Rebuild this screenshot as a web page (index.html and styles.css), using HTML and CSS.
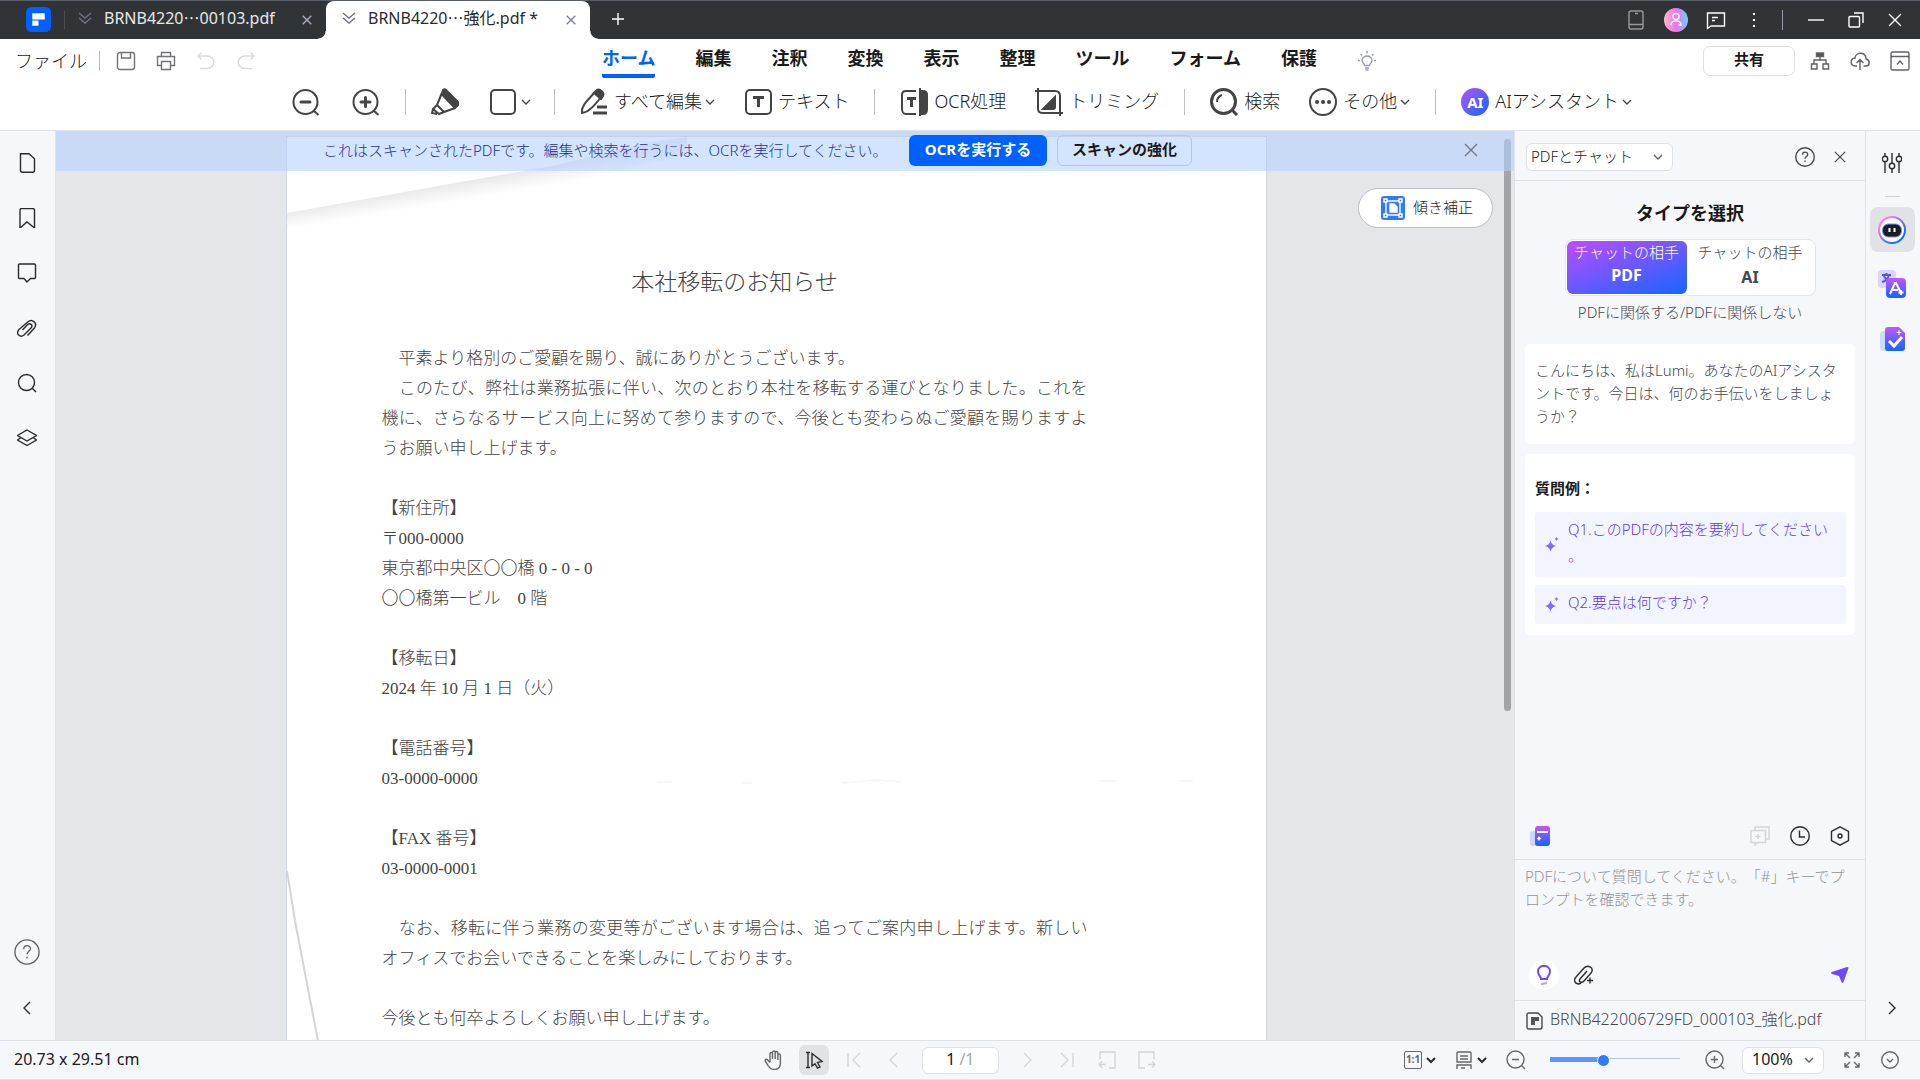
FILE: index.html
```html
<!DOCTYPE html>
<html lang="ja">
<head>
<meta charset="utf-8">
<title>BRNB422006729FD_000103_強化.pdf</title>
<link rel="stylesheet" href="styles.css">
</head>
<body>
<svg class="defs" aria-hidden="true">
  <defs>
    <linearGradient id="violetV" x1="0" y1="0" x2="0" y2="1"><stop offset="0" stop-color="#c855f5"/><stop offset="1" stop-color="#0f66ff"/></linearGradient>
    <linearGradient id="avatar" x1="0" y1="0" x2="1" y2="0"><stop offset="0" stop-color="#ffb8c4"/><stop offset=".5" stop-color="#f070f0"/><stop offset="1" stop-color="#66d4fa"/></linearGradient>
    <linearGradient id="ring" x1="0" y1="0" x2="1" y2="1"><stop offset="0.2" stop-color="#ff7cf0"/><stop offset=".75" stop-color="#1f6bff"/></linearGradient>
    <linearGradient id="fold" gradientUnits="userSpaceOnUse" x1="180" y1="44" x2="183" y2="62"><stop offset="0" stop-color="#e9e9e9"/><stop offset="1" stop-color="#ffffff"/></linearGradient>
  </defs>
  <symbol id="caret" viewBox="0 0 10 10"><path d="M1 3l4 4 4-4"/></symbol>
  <symbol id="cross" viewBox="0 0 14 14"><path d="M1 1l12 12M13 1L1 13"/></symbol>
  <symbol id="dbl" viewBox="0 0 14 14"><path d="M1 2l6 5 6-5M1 7l6 5 6-5"/></symbol>
  <symbol id="lens-minus" viewBox="0 0 20 20"><circle cx="9.500" cy="9.500" r="8.500"/><path d="M15.500 15.500L19 19M6 9.500h7"/></symbol>
  <symbol id="lens-plus" viewBox="0 0 20 20"><circle cx="9.500" cy="9.500" r="8.500"/><path d="M15.500 15.500L19 19M6 9.500h7M9.500 6v7"/></symbol>
  <symbol id="help" viewBox="0 0 20 20"><circle cx="10" cy="10" r="9.300"/><path d="M7.500 7.800c0-3.600 5.200-3.400 5.200-.3 0 2-2.600 2-2.600 4.200M10 13.600v1.400"/></symbol>
  <symbol id="spark" viewBox="0 0 14 16"><path d="M5.500 4.500Q6.500 9 11 10 6.500 11 5.500 15.500 4.500 11 0 10 4.500 9 5.500 4.500zM11.500 1q.4 1.600 2 2-1.600.4-2 2-.4-1.600-2-2 1.600-.4 2-2z"/></symbol>
</svg>

<div class="app">
  <header class="titlebar">
    <svg class="logo" viewBox="0 0 24 24"><rect width="24" height="24" rx="5" fill="#0061ff" stroke="none"/><path d="M6 6h12v6H6z" fill="#fff" stroke="none"/><path d="M6 13h6v5H6z" fill="#fff" stroke="none"/></svg>
    <span class="title-sep"></span>
    <div class="doc-tab">
      <svg class="i14"><use href="#dbl"/></svg>
      <span class="tab-name">BRNB4220⋯00103.pdf</span>
      <button class="plain tab-close" aria-label="閉じる"><svg class="i10"><use href="#cross"/></svg></button>
    </div>
    <div class="doc-tab active">
      <svg class="i14"><use href="#dbl"/></svg>
      <span class="tab-name">BRNB4220⋯強化.pdf *</span>
      <button class="plain tab-close" aria-label="閉じる"><svg class="i10"><use href="#cross"/></svg></button>
    </div>
    <button class="plain new-tab" aria-label="新しいタブ"><svg class="i14" viewBox="0 0 14 14"><path d="M7 1v12M1 7h12"/></svg></button>
    <div class="window-tools">
      <button class="plain dim" aria-label="モバイル"><svg class="i20" viewBox="0 0 20 20"><rect x="3" y="1" width="14" height="18" rx="2"/><path d="M3 14.500h14M9 3.500h3"/></svg></button>
      <button class="plain" aria-label="アカウント"><svg class="i24" viewBox="0 0 24 24"><circle cx="12" cy="12" r="12" fill="url(#avatar)" stroke="none"/><circle cx="12" cy="8.500" r="3"/><path d="M7 17c0-5.500 10-5.500 10 0h-2.500"/></svg></button>
      <button class="plain" aria-label="メッセージ"><svg class="i20" viewBox="0 0 20 20"><path d="M1.500 3h17v13H5l-3.500 2.500zM6 7.500h6M6 10.500h3"/></svg></button>
      <button class="plain" aria-label="メニュー"><svg class="i20" viewBox="0 0 20 20"><path d="M9 3h2v2H9zM9 9h2v2H9zM9 15h2v2H9z" fill="#fff" stroke="none"/></svg></button>
      <span class="win-sep"></span>
      <button class="plain" aria-label="最小化"><svg class="i16" viewBox="0 0 16 16"><path d="M0 8h16"/></svg></button>
      <button class="plain" aria-label="元に戻す"><svg class="i16" viewBox="0 0 16 16"><rect x="1" y="4.500" width="10.500" height="10.500" rx="1"/><path d="M6 1h9v10"/></svg></button>
      <button class="plain" aria-label="閉じる"><svg class="i14"><use href="#cross"/></svg></button>
    </div>
  </header>

  <div class="ribbon">
    <div class="menu-row">
      <div class="quick">
        <button class="plain file">ファイル</button>
        <span class="quick-sep"></span>
        <button class="plain" aria-label="保存"><svg class="i20" viewBox="0 0 20 20"><rect x="1.500" y="1.500" width="17" height="17" rx="2.500"/><path d="M5.500 2v5h9V2"/></svg></button>
        <button class="plain" aria-label="印刷"><svg class="i20" viewBox="0 0 20 20"><path d="M5.500 5.500V1.500h9v4M5 14.500H1.500v-9h17v9H15M5.500 10.500h9v8h-9z"/></svg></button>
        <button class="plain off" aria-label="元に戻す"><svg class="i20" viewBox="0 0 20 20"><path d="M5.500 1.500L2 5l3.500 3.500M2 5h9c9 0 9 12.500 0 12.500H4"/></svg></button>
        <button class="plain off" aria-label="やり直し"><svg class="i20" viewBox="0 0 20 20"><path d="M14.500 1.500L18 5l-3.500 3.500M18 5H9c-9 0-9 12.500 0 12.500h7"/></svg></button>
      </div>
      <nav class="menus">
        <a href="#" class="current">ホーム</a><a href="#">編集</a><a href="#">注釈</a><a href="#">変換</a><a href="#">表示</a><a href="#">整理</a><a href="#">ツール</a><a href="#">フォーム</a><a href="#">保護</a>
        <button class="plain hint" aria-label="ヒント"><svg class="i20" viewBox="0 0 20 20"><path d="M7.500 14.500c0-2-2.500-2.500-2.500-5 0-6 10-6 10 0 0 2.500-2.500 3-2.500 5zM8 17h4M8.500 19h3M10 0v2.500M1 9.500h2M17 9.500h2M3.500 3l1.500 1.500M16.500 3L15 4.500"/></svg></button>
      </nav>
      <div class="share-group">
        <button class="share">共有</button>
        <button class="plain" aria-label="組織"><svg class="i20" viewBox="0 0 20 20"><path d="M6.500 2h7v3.500h-7z" fill="#555"/><path d="M10 5.500V9M4 13V9h12v4M1.500 13h5.500v5H1.500zM13 13h5.500v5H13z"/></svg></button>
        <button class="plain" aria-label="クラウド"><svg class="i20" viewBox="0 0 20 20"><path d="M7 15H5.500C-.5 14.500 0 7.500 5 7c1-7 11-6 11 1 4.500 1 4 7 0 7h-2.500M10 19V9M6.500 12L10 8.500l3.500 3.500"/></svg></button>
        <button class="plain" aria-label="リボンを折りたたむ"><svg class="i20" viewBox="0 0 20 20"><rect x="1" y="1" width="18" height="18" rx="1.500"/><path d="M1 5.500h18M7 13.500l3-3.500 3 3.500"/></svg></button>
      </div>
    </div>
    <div class="toolbar">
      <div class="group icons-only">
        <button class="plain" aria-label="縮小"><svg class="i28" viewBox="0 0 28 28"><circle cx="13.500" cy="14" r="12"/><path d="M21.500 22.500l5 4.500"/><path d="M9 14h9" stroke-width="3" stroke-linecap="round"/></svg></button>
        <button class="plain" aria-label="拡大"><svg class="i28" viewBox="0 0 28 28"><circle cx="13.500" cy="14" r="12"/><path d="M21.500 22.500l5 4.500"/><path d="M9 14h9M13.500 9.500v9" stroke-width="3" stroke-linecap="round"/></svg></button>
      </div>
      <span class="sep"></span>
      <div class="group shapes">
        <button class="plain" aria-label="ハイライト"><svg class="i28" viewBox="0 0 28 28"><path d="M12 2c1-1 2-1 3 0l12 12c1 1 1 2 0 3l-3 3L10.500 6z" fill="#444"/><path d="M10.500 6L6 17l7 7 11-4M6 17l-4 4 6 5 5-2M2 21l-1 4 5 1"/></svg></button>
        <button class="plain with-caret" aria-label="図形"><svg class="i28" viewBox="0 0 28 28"><rect x="2" y="2" width="24" height="24" rx="4"/></svg><svg class="i10"><use href="#caret"/></svg></button>
      </div>
      <span class="sep"></span>
      <div class="group">
        <button class="plain tool"><svg class="i28" viewBox="0 0 28 28"><path d="M2 25c-1-6 2-9 14-22 2-2 8 0 6 5C14 18 9 24 2 25z"/><path d="M14 5l2-2c2-3 9 0 7 5l-2 3z" fill="#444"/><path d="M17 19h10M13 25h14" stroke-width="3"/></svg><span>すべて編集</span><svg class="i10"><use href="#caret"/></svg></button>
        <button class="plain tool"><svg class="i28" viewBox="0 0 28 28"><rect x="2" y="2" width="25" height="24" rx="4"/><path d="M9 9.500h11M14.500 9v10" stroke-width="3"/></svg><span>テキスト</span></button>
      </div>
      <span class="sep"></span>
      <div class="group">
        <button class="plain tool"><svg class="i28" viewBox="0 0 28 28"><path d="M16 3H6C3 3 2 5 2 7v14c0 3 2 5 4 5h10"/><path d="M11.500 10v9M7 10.500h9" stroke-width="3"/><path d="M20 3h3c3 0 4 2 4 4v14c0 3-1 5-4 5h-3z" fill="#444"/><path d="M20 0v28"/></svg><span>OCR処理</span></button>
        <button class="plain tool"><svg class="i28" viewBox="0 0 28 28"><path d="M0 3h20c3 0 5 2 5 5v20M3 0v21c0 3 2 4 5 4h20"/><path d="M20 9v10c0 1-1 2-2 2H8z" fill="#444"/></svg><span>トリミング</span></button>
      </div>
      <span class="sep"></span>
      <div class="group">
        <button class="plain tool"><svg class="i28" viewBox="0 0 28 28"><circle cx="13.500" cy="13.500" r="12" stroke-width="3"/><path d="M22 22l5 5" stroke-width="3"/><path d="M7 14c0-4 2-6 5-7"/></svg><span>検索</span></button>
        <button class="plain tool"><svg class="i28" viewBox="0 0 28 28"><circle cx="14" cy="14" r="13"/><path d="M8 14h.1M14 14h.1M20 14h.1" stroke-width="4" stroke-linecap="round"/></svg><span>その他</span><svg class="i10"><use href="#caret"/></svg></button>
      </div>
      <span class="sep"></span>
      <div class="group">
        <button class="plain tool"><b class="ai-badge">AI</b><span>AIアシスタント</span><svg class="i10"><use href="#caret"/></svg></button>
      </div>
    </div>
  </div>

  <div class="main">
    <aside class="rail left">
      <button class="plain" aria-label="サムネイル"><svg class="i20" viewBox="0 0 20 20"><path d="M3.500.7H12l5.500 5v11.600q0 2-2 2h-10q-2 0-2-2z"/></svg></button>
      <button class="plain" aria-label="しおり"><svg class="i20" viewBox="0 0 20 20"><path d="M3 2q0-1.500 1.500-1.500h11Q17.500.5 17.500 2v18L10 14l-7 6z"/></svg></button>
      <button class="plain" aria-label="注釈"><svg class="i20" viewBox="0 0 20 20"><path d="M2.500 1h15q1 0 1 1v12.500q0 1-1 1h-4L10 19l-3-3.500H2.500q-1 0-1-1V2q0-1 1-1z"/></svg></button>
      <button class="plain" aria-label="添付"><svg class="i20" viewBox="0 0 20 20"><path d="M10.500 17.500l6.700-7.300c4-5-2-10-6.500-6.200L2 11.500c-4 4.500 1.500 8.500 5 5.500l7-7c2.500-3-1-5.500-3.500-3.500L5.500 12"/></svg></button>
      <button class="plain" aria-label="検索"><svg class="i20" viewBox="0 0 20 20"><circle cx="9.500" cy="9.500" r="8"/><path d="M15 15l4 4"/></svg></button>
      <button class="plain" aria-label="レイヤー"><svg class="i20" viewBox="0 0 20 20"><path d="M10 2l9.500 5.500L10 13 .5 7.500zM4 9.500L.5 12 10 17.500l9.500-5.500L16 9.500"/></svg></button>
      <span class="grow"></span>
      <button class="plain" aria-label="ヘルプ"><svg class="i26"><use href="#help"/></svg></button>
      <button class="plain fold-btn" aria-label="折りたたむ"><svg class="i14" viewBox="0 0 14 14"><path d="M10 1L4 7l6 6"/></svg></button>
    </aside>

    <section class="viewer">
      <article class="page">
        <svg class="crease top" viewBox="0 0 400 90"><path d="M0 76L270 28 360 6 400 0V18L270 48 0 96z" fill="url(#fold)" stroke="none"/></svg>
        <svg class="crease side" viewBox="0 0 40 180"><path d="M0 4L8 54 31 174" stroke="#d4d4d4" stroke-width="2"/></svg>
        <svg class="crease mid" viewBox="0 0 560 8"><path d="M0 5h15M85 6h10M185 6l35-3 25 2M440 4h20M520 4h16" stroke="#f4f4f4"/></svg>
        <h1>本社移転のお知らせ</h1>
        <p>　平素より格別のご愛顧を賜り、誠にありがとうございます。</p>
        <p>　このたび、弊社は業務拡張に伴い、次のとおり本社を移転する運びとなりました。これを機に、さらなるサービス向上に努めて参りますので、今後とも変わらぬご愛顧を賜りますようお願い申し上げます。</p>
        <p class="block">【新住所】<br>〒000-0000<br>東京都中央区〇〇橋 0 - 0 - 0<br>〇〇橋第一ビル　0 階</p>
        <p class="block">【移転日】<br>2024 年 10 月 1 日（火）</p>
        <p class="block">【電話番号】<br>03-0000-0000</p>
        <p class="block">【FAX 番号】<br>03-0000-0001</p>
        <p class="block">　なお、移転に伴う業務の変更等がございます場合は、追ってご案内申し上げます。新しいオフィスでお会いできることを楽しみにしております。</p>
        <p class="block">今後とも何卒よろしくお願い申し上げます。</p>
      </article>
      <div class="scroll-thumb"></div>
      <div class="banner">
        <span class="banner-text">これはスキャンされたPDFです。編集や検索を行うには、OCRを実行してください。</span>
        <button class="primary">OCRを実行する</button>
        <button class="outline">スキャンの強化</button>
        <button class="plain banner-close" aria-label="閉じる"><svg class="i14"><use href="#cross"/></svg></button>
      </div>
      <button class="deskew"><svg class="i24" viewBox="0 0 24 24"><rect width="24" height="24" rx="3" fill="#2f7cf6" stroke="none"/><path d="M5 5h14v14H5z"/><path d="M9 8h4l3 3v5H9z" fill="#fff"/><path d="M3 3h3v3H3zM18 3h3v3h-3zM3 18h3v3H3zM18 18h3v3h-3z" fill="#2f7cf6"/></svg><span>傾き補正</span></button>
    </section>

    <aside class="chat">
      <div class="chat-head">
        <span class="pick mode"><select aria-label="モード"><option>PDFとチャット</option></select><svg class="i10"><use href="#caret"/></svg></span>
        <span class="grow"></span>
        <button class="plain" aria-label="ヘルプ"><svg class="i20"><use href="#help"/></svg></button>
        <button class="plain" aria-label="閉じる"><svg class="i12"><use href="#cross"/></svg></button>
      </div>
      <div class="chat-body">
        <h2>タイプを選択</h2>
        <div class="toggle">
          <button class="on">チャットの相手<b>PDF</b></button>
          <button>チャットの相手<b>AI</b></button>
        </div>
        <p class="note">PDFに関係する/PDFに関係しない</p>
        <div class="card">こんにちは、私はLumi。あなたのAIアシスタントです。今日は、何のお手伝いをしましょうか？</div>
        <div class="card examples">
          <h3>質問例：</h3>
          <button class="question"><svg class="spark"><use href="#spark"/></svg><span>Q1.このPDFの内容を要約してください。</span></button>
          <button class="question"><svg class="spark"><use href="#spark"/></svg><span>Q2.要点は何ですか？</span></button>
        </div>
      </div>
      <div class="chat-tools">
        <button class="plain" aria-label="プロンプト"><svg class="i20" viewBox="0 0 20 20"><rect x="0" y="5" width="12" height="15" rx="3" fill="#ccd6ff" stroke="none"/><rect x="5" y="0" width="15" height="20" rx="3" fill="url(#violetV)" stroke="none"/><path d="M7 6h11" stroke="#fff" stroke-width="2"/><path d="M9 10l1 1.500 1.500 1-1.500 1L9 15l-1-1.500-1.500-1 1.500-1z" fill="#fff" stroke="none"/></svg></button>
        <span class="grow"></span>
        <button class="plain off" aria-label="新しいチャット"><svg class="i20" viewBox="0 0 20 20"><path d="M5 4V1h14v12h-3M1 4.500h14.500v12H8L5 19v-2.500H1zM8 8v5M5.500 10.500h5"/></svg></button>
        <button class="plain" aria-label="履歴"><svg class="i20" viewBox="0 0 20 20"><circle cx="10" cy="10" r="9.300"/><path d="M9.500 4.500V11H15"/></svg></button>
        <button class="plain" aria-label="設定"><svg class="i20" viewBox="0 0 20 20"><path d="M10 .8l8.500 4.700v9L10 19.200l-8.500-4.700v-9z"/><circle cx="10" cy="10" r="2"/></svg></button>
      </div>
      <div class="composer">
        <textarea aria-label="質問" placeholder="PDFについて質問してください。「#」キーでプロンプトを確認できます。"></textarea>
        <div class="composer-row">
          <button class="plain bulb" aria-label="ヒント"><svg class="i20" viewBox="0 0 20 20"><path d="M7 14c0-2.500-3-3.500-3-7.500C4-1 16-1 16 6.500c0 4-3 5-3 7.500z" stroke="#7048ff" stroke-width="2"/><path d="M7 19.500l6-2" stroke="#b9a6ff" stroke-width="2"/></svg></button>
          <button class="plain" aria-label="添付"><svg class="i20" viewBox="0 0 20 20"><path d="M7 18l-2 1c-4 0-6-4-3-7l8-9c4-4 11 0 7 5l-7 8c-3 3-6 0-4-2l7-8M13 15.500h6M16 12.500v6"/></svg></button>
          <span class="grow"></span>
          <button class="plain" aria-label="送信"><svg class="i18" viewBox="0 0 18 18"><path d="M16 1q1.500 0 1.500 1l-5 14q-1 2-2 0L8 10 1 8q-2-1 0-2z" fill="#7048ff" stroke="none"/></svg></button>
        </div>
      </div>
      <div class="attached"><svg class="i18" viewBox="0 0 18 18"><path d="M3 1h9l4 4v10q0 2-2 2H3q-2 0-2-2V3q0-2 2-2z"/><path d="M5 5h8v4H9v4H5z" fill="#555" stroke="none"/></svg><span>BRNB422006729FD_000103_強化.pdf</span></div>
    </aside>

    <aside class="rail right">
      <button class="plain" aria-label="調整"><svg class="i20" viewBox="0 0 20 20"><path d="M3 0v3M3 9v11M10 0v10M10 16v4M17 0v3M17 9v11"/><circle cx="3" cy="6" r="2.700"/><circle cx="10" cy="13" r="2.700"/><circle cx="17" cy="6" r="2.700"/></svg></button>
      <span class="rail-sep"></span>
      <button class="plain chosen" aria-label="AIチャット"><svg class="i28" viewBox="0 0 28 28"><circle cx="14" cy="14" r="13" fill="#fff" stroke="url(#ring)" stroke-width="2"/><rect x="4.500" y="8" width="19" height="13" rx="6" fill="#1b1c22" stroke="#6d8cff" stroke-width="1"/><path d="M11.500 12v4M16.500 12v4" stroke="#fff" stroke-width="2"/></svg></button>
      <button class="plain ai-tool" aria-label="翻訳"><svg class="i28" viewBox="0 0 28 28"><rect x="0" y="0" width="18" height="18" rx="4" fill="#dcd2fb" stroke="none"/><path d="M4 5h9M8.500 3v2M11 5c-1 4-3 6-7 7M6 6c1 3 3 4 5 5" stroke="#5057f0" stroke-width="2"/><rect x="8" y="8" width="20" height="20" rx="4" fill="url(#violetV)" stroke="none"/><path d="M12 24l5-11h1l4 8M14 20h6M23 20v5M20.500 22.500h5" stroke="#fff" stroke-width="2"/></svg></button>
      <button class="plain ai-tool" aria-label="校正"><svg class="i28" viewBox="0 0 28 28"><rect x="2" y="6" width="12" height="20" rx="4" fill="#ccd9fd" stroke="none"/><path d="M10 2h11l6 6v15q0 3-3 3H10q-3 0-3-3V5q0-3 3-3z" fill="url(#violetV)" stroke="none"/><path d="M11 16l5 5 8-9" stroke="#fff" stroke-width="3"/><path d="M21 5v5M18.500 7.500h5" stroke="#fff" stroke-width="1"/></svg></button>
      <span class="grow"></span>
      <button class="plain fold-btn" aria-label="展開"><svg class="i14" viewBox="0 0 14 14"><path d="M4 1l6 6-6 6"/></svg></button>
    </aside>
  </div>

  <footer class="status">
    <span class="size">20.73 x 29.51 cm</span>
    <div class="nav">
      <button class="plain" aria-label="手のひら"><svg class="i20" viewBox="0 0 20 20"><path d="M6 12V4c0-2 2.500-2 2.500 0v5V2.500c0-2 2.700-2 2.700 0V9 3c0-2 2.600-2 2.600 0v7V5.500c0-2 2.600-2 2.600 0V13c0 8-9 8-12 3L1.500 11.500c-1-2 1-3 2.200-1.500L6 12.500"/></svg></button>
      <button class="plain picked" aria-label="選択"><svg class="i20" viewBox="0 0 20 20"><path d="M2 2.500h4M4 3v14M2 17.500h4M8 3.500l10 8-4.500 1 2.500 4.500-2.500 1.200-2.500-4.500L8 16z"/></svg></button>
      <button class="plain off" aria-label="最初"><svg class="i16" viewBox="0 0 16 16"><path d="M2 1v14M14 1L7 8l7 7"/></svg></button>
      <button class="plain off" aria-label="前"><svg class="i16" viewBox="0 0 16 16"><path d="M11 1L4 8l7 7"/></svg></button>
      <label class="page-box"><input aria-label="ページ" value="1"><span>/1</span></label>
      <button class="plain off" aria-label="次"><svg class="i16" viewBox="0 0 16 16"><path d="M5 1l7 7-7 7"/></svg></button>
      <button class="plain off" aria-label="最後"><svg class="i16" viewBox="0 0 16 16"><path d="M14 1v14M2 1l7 7-7 7"/></svg></button>
      <button class="plain off" aria-label="前の表示"><svg class="i18" viewBox="0 0 18 18"><path d="M2 8V1h15v16h-6M8 13.500H1M4 10.500l-3 3 3 3"/></svg></button>
      <button class="plain off" aria-label="次の表示"><svg class="i18" viewBox="0 0 18 18"><path d="M16 8V1H1v16h6M10 13.500h7M14 10.500l3 3-3 3"/></svg></button>
    </div>
    <div class="view">
      <button class="plain pair" aria-label="実際のサイズ"><span class="ratio">1:1</span><svg class="i10 dark"><use href="#caret"/></svg></button>
      <button class="plain pair" aria-label="ページ表示"><svg class="i18" viewBox="0 0 18 18"><path d="M3 1h12q1 0 1 1v9H2V2q0-1 1-1zM5 5h8M5 8h8M2 18v-4h14v4M6 17h4"/></svg><svg class="i10 dark"><use href="#caret"/></svg></button>
      <button class="plain" aria-label="縮小"><svg class="i20"><use href="#lens-minus"/></svg></button>
      <input class="zoom" type="range" min="0" max="100" value="40" aria-label="ズーム">
      <button class="plain" aria-label="拡大"><svg class="i20"><use href="#lens-plus"/></svg></button>
      <span class="pick percent"><select aria-label="倍率"><option>100%</option></select><svg class="i10"><use href="#caret"/></svg></span>
      <button class="plain" aria-label="全画面"><svg class="i16" viewBox="0 0 16 16"><path d="M1 5V1h4M1 1l5 5M11 1h4v4M15 1l-5 5M1 11v4h4M1 15l5-5M15 11v4h-4M15 15l-5-5"/></svg></button>
      <button class="plain" aria-label="その他"><svg class="i18" viewBox="0 0 18 18"><circle cx="9" cy="9" r="8.300"/><path d="M6 8l3 3 3-3"/></svg></button>
    </div>
  </footer>
</div>
</body>
</html>
```
FILE: styles.css
```css
* { box-sizing: border-box; }
body { margin: 0; font-family: "Noto Sans", "Noto Sans CJK JP", sans-serif; font-size: 15px; font-weight: 300; color: #1a1a1a; text-spacing-trim: space-all; }
h1, h2, h3, p { margin: 0; }
b { font-weight: 700; }
button, input, select, textarea { font: inherit; color: inherit; }
button { cursor: pointer; }
svg { display: block; flex: none; fill: none; stroke: currentColor; stroke-width: 1.4; }
.defs { position: absolute; width: 0; height: 0; }
.plain { display: flex; align-items: center; justify-content: center; padding: 0; border: 0; background: none; }
.grow { flex: 1; }
.i10 { width: 10px; height: 10px; }
.i12 { width: 12px; height: 12px; }
.i14 { width: 14px; height: 14px; }
.i16 { width: 16px; height: 16px; }
.i18 { width: 18px; height: 18px; }
.i20 { width: 20px; height: 20px; }
.i24 { width: 24px; height: 24px; }
.i26 { width: 26px; height: 26px; stroke-width: 1; color: #5c5f66; }
.i28 { width: 28px; height: 28px; stroke-width: 2; }
.off { color: #d3d5d9; }

.app { display: grid; grid-template-rows: auto auto 1fr auto; height: 100vh; overflow: hidden; background: #fff; }

/* Title bar */
.titlebar { display: flex; align-items: stretch; height: 39px; padding-left: 26px; background: #303437; border-top: 1px solid #5a5e66; color: #fff; font-weight: 400; }
.logo { width: 25px; height: 25px; margin-top: 6px; }
.title-sep { width: 1px; height: 18px; margin: 10px 13px 0; background: #4a4e54; }
.doc-tab { position: relative; display: flex; align-items: center; width: 248px; padding: 0 14px 4px 0; font-size: 16px; line-height: 24px; color: #e8e8ea; }
.doc-tab svg { color: #6f7280; }
.tab-name { flex: 1; padding-left: 12px; white-space: nowrap; }
.tab-close { width: 10px; padding-top: 4px; }
.tab-close .i10 { color: #a9abb8; stroke-width: 2; }
.doc-tab.active { width: 264px; padding: 0 14px 4px 16px; background: #fff; border-radius: 8px 8px 0 0; color: #2a2a2e; }
.active .tab-close .i10 { color: #7d8098; }
.active::before, .active::after { content: ""; position: absolute; bottom: 0; width: 8px; height: 8px; }
.active::before { left: -8px; background: radial-gradient(circle at 0 0, #303437 7px, #fff 8px); }
.active::after { right: -8px; background: radial-gradient(circle at 100% 0, #303437 7px, #fff 8px); }
.new-tab { margin: 0 0 2px 21px; }
.window-tools { display: flex; align-items: center; gap: 18px; margin-left: auto; padding-right: 18px; }
.window-tools .dim { color: #96989e; }
.win-sep { width: 1px; height: 20px; margin-right: 7px; background: #9699ad; }
.window-tools button:nth-last-child(-n+2) { margin-left: 6px; }

/* Ribbon */
.ribbon { border-bottom: 1px solid #e2e3e6; }
.menu-row { display: grid; grid-template-columns: 602px 1fr auto; height: 41px; }
.quick { display: flex; align-items: center; gap: 20px; padding: 3px 0 0 15px; color: #707276; }
.quick .off { color: #d9dadd; }
.quick .file { font-size: 18px; line-height: 24px; color: #1a1a1a; }
.quick-sep { width: 1px; height: 20px; margin: 0 -4px 0 -8px; background: #b9bbc0; }
.menus { display: flex; align-items: flex-start; gap: 40px; font-size: 18px; line-height: 24px; font-weight: 700; }
.menus a { padding: 7px 0 4px; color: inherit; text-decoration: none; white-space: nowrap; }
.menus .current { color: #0061ff; border-bottom: 4px solid #0061ff; border-radius: 0 0 2px 2px; }
.hint { padding-top: 12px; color: #9a9db5; }
.share-group { display: flex; align-items: center; gap: 20px; padding: 2px 10px 0 0; color: #606266; }
.share { width: 92px; height: 30px; margin-right: -5px; padding: 0 0 4px; border: 1px solid #dfe0e2; border-radius: 7px; background: #fff; font-weight: 700; line-height: 22px; color: #1a1a1a; }
.toolbar { display: flex; align-items: center; justify-content: center; gap: 25px; height: 50px; padding: 0 0 6px 4px; color: #444; }
.group { display: flex; align-items: center; gap: 29px; }
.icons-only { gap: 32px; }
.shapes { gap: 30px; margin-right: -2px; }
.sep { width: 1px; height: 26px; background: #bfc0c3; }
.with-caret { gap: 4px; }
.tool { gap: 6px; font-size: 18px; line-height: 24px; color: #1a1a1a; white-space: nowrap; }
.tool span { padding-bottom: 3px; }
.tool svg { color: #444; }
.tool .i10 { margin-left: -3px; }
.ai-badge { width: 28px; height: 28px; border-radius: 50%; background: linear-gradient(135deg, #b455f5, #1466ff); color: #fff; font-size: 15px; line-height: 28px; text-align: center; }

/* Main */
.main { display: grid; grid-template-columns: 56px 1fr 351px 55px; min-height: 0; }
.rail { display: flex; flex-direction: column; align-items: center; background: #f5f7fb; color: #2b2b2e; }
.left { gap: 35px; padding: 22px 2px 25px 0; border-right: 1px solid #e2e3e6; }
.left .fold-btn { margin-top: 1px; }
.right { padding: 22px 2px 25px 0; border-left: 1px solid #e2e3e6; }
.rail-sep { width: 15px; height: 1px; margin: 23px 0 10px; background: #d0d2d8; }
.chosen { width: 45px; height: 45px; border-radius: 8px; background: #e1e2e5; }
.ai-tool { margin-top: 18px; height: 28px; }
.ai-tool + .ai-tool { margin-top: 27px; }
.fold-btn { color: #2b2b2e; }

.viewer { position: relative; overflow: hidden; background: #e5e6ea; padding: 5px 18px 0 0; }
.page { position: relative; width: 981px; min-height: 1386px; margin: 0 auto; padding: 131px 178px 0 95px; border: 1px solid #d0d5e2; background: #fff; color: #444; font-family: "Liberation Serif", "Noto Sans CJK JP", serif; font-size: 17px; line-height: 30px; }
.page h1 { margin-bottom: 46px; font-size: 23px; font-weight: 300; line-height: 30px; text-align: center; }
.page p { text-align: justify; }
.page .block { margin-top: 30px; }
.crease { position: absolute; left: 0; }
.crease.top { top: 0; width: 400px; height: 90px; }
.crease.side { top: 730px; width: 40px; height: 180px; }
.crease.mid { top: 640px; left: 370px; width: 560px; height: 8px; }
.scroll-thumb { position: absolute; top: 8px; right: 3px; width: 7px; height: 572px; border-radius: 4px; background: #a3a4a8; }
.banner { position: absolute; top: 0; left: 0; right: 0; display: flex; align-items: center; height: 40px; padding: 0 36px 2px 267px; background: rgba(180, 208, 255, 0.58); }
.banner-text { width: 586px; padding-bottom: 2px; color: #1f2f96; white-space: nowrap; }
.primary, .outline { height: 31px; padding: 0 0 2px; border-radius: 6px; font-weight: 700; line-height: 22px; white-space: nowrap; }
.primary { width: 138px; margin-right: 10px; border: 0; background: #0061ff; color: #fff; }
.outline { width: 135px; border: 1px solid #b6c6e6; background: none; }
.banner-close { margin-left: auto; color: #70758a; }
.deskew { position: absolute; top: 57px; right: 21px; display: flex; align-items: center; gap: 8px; width: 135px; height: 40px; padding: 0 0 0 22px; border: 1px solid #b9bccd; border-radius: 20px; background: #fff; }
.deskew span { padding-bottom: 3px; }
.deskew svg { stroke: #fff; }

/* Chat panel */
.chat { display: flex; flex-direction: column; background: #f5f7fb; color: #46484d; border-left: 1px solid #e2e3e6; }
.chat-head { display: flex; align-items: center; gap: 19px; height: 50px; padding: 3px 19px 0 11px; border-bottom: 1px solid #dfe1e5; }
.pick { position: relative; display: flex; align-items: center; border: 1px solid #e0e1e4; border-radius: 6px; background: #fff; color: #1a1a1a; }
.pick select { appearance: none; width: 100%; height: 100%; padding: 0 0 2px; border: 0; background: none; }
.pick svg { position: absolute; right: 9px; color: #606266; pointer-events: none; }
.mode { width: 147px; height: 28px; padding-left: 4px; }
.chat-body { flex: 1; padding: 17px 10px 0; }
.chat h2 { font-size: 18px; line-height: 30px; text-align: center; color: #1a1a1a; }
.toggle { display: flex; width: 251px; height: 57px; margin: 11px auto 5px; padding: 1px; border: 1px solid #e4e5e8; border-radius: 8px; background: #fff; }
.toggle button { flex: 1; display: flex; flex-direction: column; align-items: center; padding: 0; border: 0; border-radius: 6px; background: none; line-height: 22px; }
.toggle b { font-size: 16px; line-height: 28px; }
.toggle .on { flex: none; width: 120px; background: linear-gradient(160deg, #c04bff, #1566ff); color: #fff; }
.toggle .on b { line-height: 24px; }
.note { margin-bottom: 21px; line-height: 22px; text-align: center; }
.card { margin-bottom: 10px; padding: 15px 10px 16px; border-radius: 5px; background: #fff; line-height: 23px; }
.examples { padding: 23px 9px 11px 10px; }
.card h3 { margin-bottom: 12px; font-size: 15px; line-height: 23px; color: #1a1a1a; }
.question { display: flex; align-items: center; gap: 9px; width: 100%; margin-top: 8px; padding: 4px 8px 9px 10px; border: 0; border-radius: 3px; background: #f2f5ff; color: #6236f5; line-height: 26px; text-align: left; line-break: anywhere; }
.spark { width: 14px; height: 16px; margin-top: 4px; fill: #836aff; stroke: none; }
.chat-tools { display: flex; align-items: center; gap: 20px; height: 46px; padding: 0 15px 2px 15px; border-bottom: 1px solid #dfe1e5; color: #2b2b2e; }
.composer { display: flex; flex-direction: column; height: 141px; padding: 5px 8px 10px 10px; border-bottom: 1px solid #dfe1e5; }
.composer textarea { flex: 1; width: 100%; padding: 0; border: 0; outline: 0; resize: none; background: none; line-height: 23px; overflow: hidden; text-spacing-trim: space-all; }
.composer textarea::placeholder { color: #939396; }
.composer-row { display: flex; align-items: center; padding: 0 8px 0 4px; color: #2b2b2e; }
.bulb { width: 30px; height: 30px; margin-right: 15px; border-radius: 50%; background: #fff; }
.attached { display: flex; align-items: center; gap: 6px; height: 39px; padding-left: 11px; font-size: 16px; line-height: 22px; }
.attached span { padding-bottom: 3px; }

/* Status bar */
.status { display: grid; grid-template-columns: 1fr auto 1fr; align-items: center; height: 40px; border-top: 1px solid #dfe1e5; border-bottom: 1px solid #dfe1e5; background: #f5f7fb; color: #65676c; font-weight: 400; }
.size { padding: 0 0 2px 14px; font-size: 16px; line-height: 22px; color: #1a1a1a; }
.nav { display: flex; align-items: center; gap: 16px; }
.nav button { width: 24px; }
.nav .picked { width: 30px; height: 30px; margin: 0 -3px; border-radius: 6px; background: #e1e2e5; color: #2b2b2e; }
.page-box { display: flex; align-items: center; width: 77px; height: 27px; padding: 0 23px 2px 0; border: 1px solid #e0e1e4; border-radius: 6px; background: #fff; font-size: 16px; color: #a3a5aa; }
.page-box input { flex: 1; width: 20px; padding: 0 4px 0 0; border: 0; outline: 0; background: none; text-align: right; color: #1a1a1a; }
.view { display: flex; align-items: center; justify-content: flex-end; gap: 21px; padding-right: 21px; }
.pair { gap: 4px; margin-right: -2px; }
.pair .dark { color: #2b2b2e; stroke-width: 2; }
.ratio { width: 18px; height: 18px; border: 1px solid #65676c; border-radius: 2px; font-size: 10px; font-weight: 700; line-height: 15px; text-align: center; }
.zoom { appearance: none; width: 130px; height: 14px; margin: 0 4px 0 3px; background: linear-gradient(#5b96ff, #5b96ff) 0 4px / 52px 5px no-repeat, linear-gradient(#bcc5d8, #bcc5d8) 0 5px / 100% 1px no-repeat; }
.zoom::-webkit-slider-thumb { appearance: none; width: 13px; height: 13px; border: 1px solid #fff; border-radius: 50%; background: #2f7cf6; }
.percent { width: 82px; height: 27px; margin: 0 -1px 0 -4px; padding-left: 9px; font-size: 16px; }
```
